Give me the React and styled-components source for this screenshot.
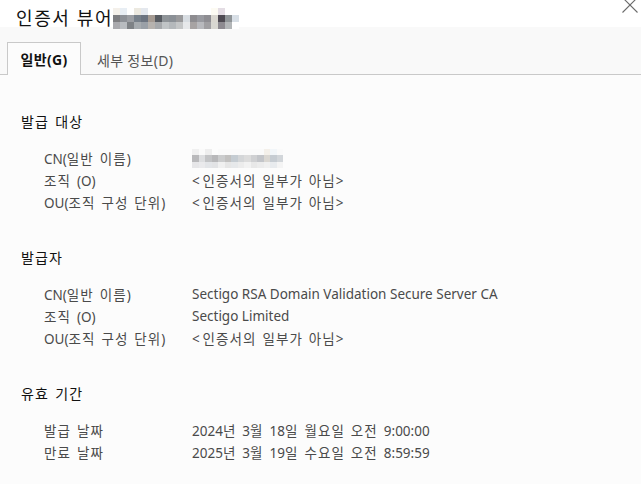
import React from 'react';
import styled, { createGlobalStyle } from 'styled-components';

const GlobalStyle = createGlobalStyle`
  html, body {
    margin: 0;
    padding: 0;
    background: #fcfcfc;
  }
  body {
    font-family: "Noto Sans", "Noto Sans CJK KR", sans-serif;
    -webkit-font-smoothing: antialiased;
  }
`;

const mosaicTitle = [
  ['#f4f0ea', '#7d7d80', '#a9a9ad'],
  ['#e8eef4', '#8c9096', '#b8bcc0'],
  ['#ffffff', '#9b9ea3', '#7e8286'],
  ['#ece9e0', '#77808a', '#a6abaf'],
  ['#e4e8ee', '#6c7480', '#9aa0a7'],
  ['#ffffff', '#a49a92', '#b6b2ae'],
  ['#ffffff', '#575b61', '#a5a8ab'],
  ['#ffffff', '#8f9498', '#c0c4c6'],
  ['#ffffff', '#8b9096', '#b4b8bb'],
  ['#ffffff', '#9a9a9c', '#c4c6c7'],
  ['#ffffff', '#d8dde2', '#e6e8ea'],
  ['#ffffff', '#8d8c90', '#a7a3a3'],
  ['#ffffff', '#999aa0', '#b8b9bd'],
  ['#ffffff', '#8e8d92', '#a09fa2'],
  ['#fdfbf3', '#d9d6cf', '#d8d7d1'],
  ['#e4dde4', '#4e4a52', '#8d8a90'],
  ['#ffffff', '#8f9497', '#b3b6b8'],
  ['#ffffff', '#d8dfe6', '#ffffff'],
];

const mosaicCn = [
  ['#f0f0f0', '#b9b9bb', '#e6e6e8'],
  ['#fafafa', '#dddee0', '#eaeaec'],
  ['#eeeeee', '#c3c4c6', '#e3e5e8'],
  ['#fcfcfc', '#b8b8ba', '#e2e3e5'],
  ['#fafafa', '#cbcccd', '#f0f0f0'],
  ['#fafafa', '#c2c1c0', '#e6e6e6'],
  ['#fafafa', '#c5ccd2', '#e6e8ea'],
  ['#fafafa', '#d4d6d8', '#ececec'],
  ['#fafafa', '#dcdcdc', '#f2f2f2'],
  ['#fafafa', '#cfd0d2', '#e8e8e8'],
  ['#fafafa', '#c3c5c9', '#ececec'],
  ['#f4f0ea', '#dad7d2', '#f0f0f0'],
  ['#f2f6f9', '#c6ccd2', '#e8ebee'],
  ['#fafafa', '#d2d6da', '#f4f4f4'],
];

const sections = [
  {
    title: '발급 대상',
    rows: [
      { label: 'CN(일반 이름)', redacted: true },
      { label: '조직 (O)', value: '<인증서의 일부가 아님>' },
      { label: 'OU(조직 구성 단위)', value: '<인증서의 일부가 아님>' },
    ],
  },
  {
    title: '발급자',
    rows: [
      { label: 'CN(일반 이름)', value: 'Sectigo RSA Domain Validation Secure Server CA' },
      { label: '조직 (O)', value: 'Sectigo Limited' },
      { label: 'OU(조직 구성 단위)', value: '<인증서의 일부가 아님>' },
    ],
  },
  {
    title: '유효 기간',
    rows: [
      { label: '발급 날짜', value: '2024년 3월 18일 월요일 오전 9:00:00' },
      { label: '만료 날짜', value: '2025년 3월 19일 수요일 오전 8:59:59' },
    ],
  },
];

// Hangul in the original dialog font runs wider than Noto CJK, so
// Hangul runs and angle brackets get a little extra tracking.
const KText = ({ children }) => {
  const parts = children.split(/([\uAC00-\uD7A3][\uAC00-\uD7A3 ]*|[<>])/g).filter(Boolean);
  return parts.map((p, i) => {
    if (p === '<' || p === '>') return <Bracket key={i}>{p}</Bracket>;
    if (/[\uAC00-\uD7A3]/.test(p)) return <Hangul key={i}>{p}</Hangul>;
    return <React.Fragment key={i}>{p}</React.Fragment>;
  });
};

const Mosaic = ({ columns, cell }) => (
  <MosaicGrid>
    {columns.map((col, i) => (
      <MosaicCol key={i}>
        {col.map((c, j) => (
          <MosaicCell key={j} $size={cell} style={{ background: c }} />
        ))}
      </MosaicCol>
    ))}
  </MosaicGrid>
);

const CloseIcon = () => (
  <svg width="16" height="16" viewBox="0 0 16 16" fill="none">
    <path d="M0.5 0.5 L15.5 15.5 M15.5 0.5 L0.5 15.5" stroke="#6b6b6b" strokeWidth="1.1" />
  </svg>
);

const App = () => (
  <>
    <GlobalStyle />
    <Window>
      <TitleBar>
        <Title>인증서 뷰어</Title>
        <TitleRedact>
          <Mosaic columns={mosaicTitle} cell={7} />
        </TitleRedact>
        <CloseButton aria-label="닫기">
          <CloseIcon />
        </CloseButton>
      </TitleBar>
      <TabBar>
        <Tab $active>일반(G)</Tab>
        <Tab>세부 정보(D)</Tab>
      </TabBar>
      <Content>
        {sections.map((s) => (
          <Section key={s.title}>
            <SectionTitle>
              <KText>{s.title}</KText>
            </SectionTitle>
            <Rows>
              {s.rows.map((r) => (
                <Row key={r.label}>
                  <Label>
                    <KText>{r.label}</KText>
                  </Label>
                  {r.redacted ? (
                    <ValueRedact>
                      <Mosaic columns={mosaicCn} cell={6.5} />
                    </ValueRedact>
                  ) : (
                    <Value>
                      <KText>{r.value}</KText>
                    </Value>
                  )}
                </Row>
              ))}
            </Rows>
          </Section>
        ))}
      </Content>
    </Window>
  </>
);

export default App;

const Window = styled.div`
  width: 641px;
  height: 484px;
  overflow: hidden;
  background: #fcfcfc;
  display: flex;
  flex-direction: column;
`;

const TitleBar = styled.div`
  position: relative;
  height: 27px;
  background: #ffffff;
  display: flex;
  align-items: flex-start;
  padding-left: 16px;
  z-index: 1;
`;

const Title = styled.h1`
  margin: 8px 0 0;
  font-size: 18px;
  font-weight: 400;
  line-height: 20px;
  letter-spacing: 1.6px;
  color: #111;
  white-space: nowrap;
`;

const TitleRedact = styled.div`
  margin-top: 8px;
`;

const MosaicGrid = styled.div`
  display: flex;
`;

const MosaicCol = styled.div`
  display: flex;
  flex-direction: column;
`;

const MosaicCell = styled.div`
  width: ${(p) => p.$size}px;
  height: ${(p) => p.$size}px;
`;

const CloseButton = styled.button`
  position: absolute;
  top: -3px;
  right: 3px;
  padding: 0;
  border: none;
  background: none;
  display: flex;
`;

const TabBar = styled.div`
  height: 48px;
  box-sizing: border-box;
  background: #f9f9f9;
  border-bottom: 1px solid #c9c9c9;
  display: flex;
  align-items: flex-end;
  padding-left: 7px;
`;

const Tab = styled.div`
  box-sizing: border-box;
  height: ${(p) => (p.$active ? '33px' : '32px')};
  margin-bottom: -1px;
  padding: 0 12px;
  display: flex;
  align-items: center;
  justify-content: center;
  font-size: 14px;
  font-weight: ${(p) => (p.$active ? 700 : 400)};
  color: ${(p) => (p.$active ? '#111' : '#555')};
  background: ${(p) => (p.$active ? '#fcfcfc' : 'transparent')};
  border: 1px solid ${(p) => (p.$active ? '#c9c9c9' : 'transparent')};
  border-bottom: none;
  min-width: ${(p) => (p.$active ? '74px' : 'auto')};
  margin-right: 3px;
  letter-spacing: 0.3px;
`;

const Content = styled.div`
  padding: 37px 0 0 21px;
  display: flex;
  flex-direction: column;
  gap: 35px;
`;

const Section = styled.section`
  display: flex;
  flex-direction: column;
  gap: 15px;
`;

const SectionTitle = styled.h2`
  margin: 0;
  font-size: 14px;
  font-weight: 400;
  line-height: 20px;
  color: #111;
`;

const Rows = styled.div`
  display: flex;
  flex-direction: column;
  padding-left: 23px;
`;

const Row = styled.div`
  display: grid;
  grid-template-columns: 148px 1fr;
  height: 22px;
  align-items: center;
  font-size: 13.5px;
  color: #4a4a4a;
`;

const Label = styled.span`
  white-space: nowrap;
`;

const Value = styled.span`
  white-space: nowrap;
`;

const Hangul = styled.span`
  letter-spacing: 0.08em;
  word-spacing: 0.1em;
`;

const Bracket = styled.span`
  letter-spacing: 0.2em;
`;

const ValueRedact = styled.div`
  display: flex;
  margin-top: 1px;
`;
